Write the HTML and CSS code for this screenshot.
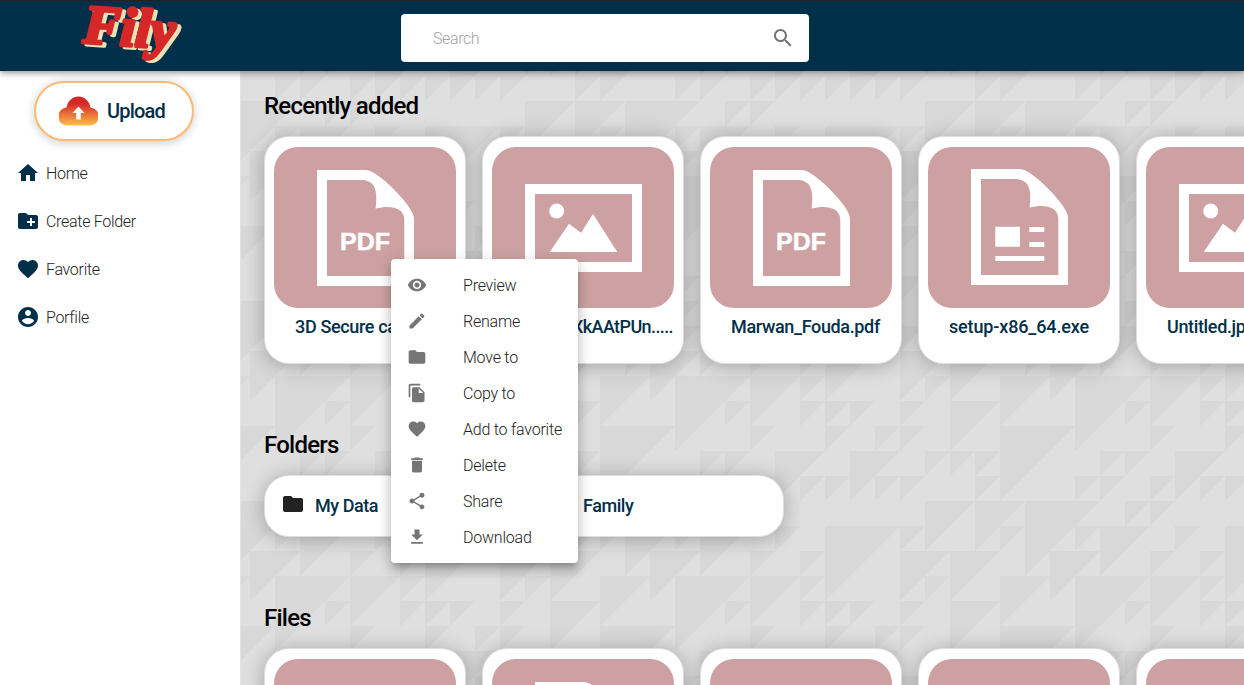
FILE: index.html
```html
<!DOCTYPE html>
<html lang="en">
<head>
<meta charset="utf-8">
<title>Fily</title>
<link rel="stylesheet" href="styles.css">
</head>
<body>
<svg class="defs" width="0" height="0" aria-hidden="true">
  <defs>
    <linearGradient id="sunset" x1="0" y1="0" x2="0" y2="1"><stop offset=".25" stop-color="#d62828"/><stop offset="1" stop-color="#fcbf49"/></linearGradient>
    <symbol id="folder" viewBox="0 0 24 24"><path d="M10 4H4c-1.1 0-1.99.9-1.99 2L2 18c0 1.1.9 2 2 2h16c1.100 0 2-.9 2-2V8c0-1.100-.9-2-2-2h-8l-2-2z"/></symbol>
    <symbol id="heart" viewBox="0 0 24 24"><path d="M12 21.350l-1.450-1.320C5.400 15.360 2 12.280 2 8.500 2 5.420 4.420 3 7.500 3c1.740 0 3.410.81 4.500 2.090C13.090 3.810 14.760 3 16.500 3 19.580 3 22 5.420 22 8.500c0 3.780-3.400 6.860-8.550 11.540L12 21.350z"/></symbol>
    <symbol id="page" viewBox="0 0 97 116"><path fill-rule="evenodd" d="M0 0H49C61 0 97 37 97 48V116H0ZM10 10V106H87.300V50C87.300 37 73 35 58.500 38.500C60.500 24 60 10 44 10Z"/></symbol>
    <symbol id="pdf" viewBox="0 0 97 116"><use href="#page"/><text class="pdf-text" x="23" y="80" textLength="50" lengthAdjust="spacingAndGlyphs">PDF</text></symbol>
    <symbol id="app" viewBox="0 0 97 116"><use href="#page"/><path d="M24.300 57.700h24.700v20H24.300zM58.300 58h15v5h-15zM58.300 73h15v5h-15zM24.300 87h49v5h-49z"/></symbol>
    <symbol id="image" viewBox="0 0 117 88"><path fill-rule="evenodd" d="M0 0H117V88H0ZM10 10V78H107V10Z"/><circle cx="31.700" cy="27" r="7.500"/><path d="M24.700 68L44 39.700L56 48.700L68 30L92.300 68Z"/></symbol>
    <g id="triangles">
      <path d="M0 7h2l-2 2zM2 7h2l-2 2zM6 7h2l-2 2zM10 7h1l-1 1zM12 7h1l-1 1zM1 0h1l-1 1zM4 0h2l-2 2zM7 0h3l-3 3zM10 0h2l-2 2zM12 0h1l-1 1zM13 1h1l-1 1zM14 1h1l-1 1zM0 1h1l-1 1zM2 1h2l-2 2zM9 1h1l-1 1zM12 1h1l-1 1zM13 2h1l-1 1zM15 2h1l-1 1zM0 2h1l-1 1zM4 2h3l-3 3zM10 2h1l-1 1zM14 3h2l-2 2zM1 3h1l-1 1zM2 3h1l-1 1zM3 3h1l-1 1zM8 3h1l-1 1zM9 3h1l-1 1zM11 3h2l-2 2zM13 4h1l-1 1zM15 4h1l-1 1zM0 4h1l-1 1zM3 4h1l-1 1zM7 4h1l-1 1zM8 4h1l-1 1zM10 4h1l-1 1zM12 4h1l-1 1zM1 5h2l-2 2zM3 5h2l-2 2zM5 5h3l-3 3zM9 5h1l-1 1zM10 5h1l-1 1zM13 6h3l-3 3zM0 6h1l-1 1zM4 6h1l-1 1zM7 6h1l-1 1zM8 6h2l-2 2zM11 6h1l-1 1z"/>
    </g>
    <pattern id="mosaic" width="400" height="200" patternUnits="userSpaceOnUse" patternTransform="translate(259 105)">
      <rect width="400" height="200" fill="#dfdfdf"/>
      <g transform="scale(25)" fill="#d8d8d8"><use href="#triangles"/><use href="#triangles" y="-8"/></g>
    </pattern>
  </defs>
</svg>

<header class="topbar">
  <svg class="logo" viewBox="0 0 120 70" role="img" aria-label="Fily">
    <g transform="rotate(4 55 35)">
      <text class="logo-text logo-back" x="10" y="47" textLength="92" lengthAdjust="spacingAndGlyphs">Fily</text>
      <text class="logo-text logo-front" x="6" y="45" textLength="92" lengthAdjust="spacingAndGlyphs">Fily</text>
    </g>
  </svg>
  <div class="search">
    <span class="search-hint">Search</span>
    <svg class="icon" viewBox="0 0 24 24"><path d="M15.500 14h-.79l-.28-.27C15.410 12.590 16 11.110 16 9.500 16 5.910 13.090 3 9.500 3S3 5.910 3 9.500 5.910 16 9.500 16c1.610 0 3.090-.59 4.230-1.570l.27.28v.79l5 4.990L20.490 19l-4.990-5zm-6 0C7.010 14 5 11.990 5 9.500S7.010 5 9.500 5 14 7.010 14 9.500 11.990 14 9.500 14z"/></svg>
  </div>
</header>

<div class="layout">
  <aside class="sidebar">
    <button class="upload">
      <svg class="cloud" viewBox="0 0 39 30"><path fill="url(#sunset)" d="M9 29.500A9 9 0 0 1 7.500 11.500C9 4.500 13.500.5 19.500.5S30 4.500 31.500 11.500A9 9 0 0 1 30 29.500Z"/><path fill="#fff" d="M19.500 10.500l6 6.500h-3.700v6.500h-4.600V17h-3.700z"/></svg>
      <span>Upload</span>
    </button>
    <nav class="nav">
      <a class="nav-item"><svg class="icon" viewBox="0 0 24 24"><path d="M10 20v-6h4v6h5v-8h3L12 3 2 12h3v8z"/></svg><span>Home</span></a>
      <a class="nav-item"><svg class="icon" viewBox="0 0 24 24"><path d="M20 6h-8l-2-2H4c-1.110 0-1.990.89-1.990 2L2 18c0 1.110.89 2 2 2h16c1.110 0 2-.89 2-2V8c0-1.110-.89-2-2-2zm-1 8h-3v3h-2v-3h-3v-2h3V9h2v3h3v2z"/></svg><span>Create Folder</span></a>
      <a class="nav-item"><svg class="icon"><use href="#heart"/></svg><span>Favorite</span></a>
      <a class="nav-item"><svg class="icon" viewBox="0 0 24 24"><path d="M12 2C6.480 2 2 6.480 2 12s4.480 10 10 10 10-4.480 10-10S17.520 2 12 2zm0 3c1.660 0 3 1.340 3 3s-1.340 3-3 3-3-1.340-3-3 1.340-3 3-3zm0 14.200c-2.500 0-4.710-1.280-6-3.220.03-1.990 4-3.080 6-3.080 1.990 0 5.970 1.090 6 3.080-1.290 1.940-3.500 3.220-6 3.220z"/></svg><span>Porfile</span></a>
    </nav>
  </aside>

  <main class="content">
    <svg class="backdrop" aria-hidden="true"><rect width="100%" height="100%" fill="url(#mosaic)"/></svg>
    <div class="sections">
      <h2 class="heading heading-recent">Recently added</h2>
      <div class="cards">
        <article class="card"><div class="thumb"><svg class="doc"><use href="#pdf"/></svg></div><div class="name">3D Secure card.pdf</div></article>
        <article class="card"><div class="thumb"><svg class="pic"><use href="#image"/></svg></div><div class="name name-long">1_XkAAtPUn.....</div></article>
        <article class="card"><div class="thumb"><svg class="doc"><use href="#pdf"/></svg></div><div class="name">Marwan_Fouda.pdf</div></article>
        <article class="card"><div class="thumb"><svg class="doc doc-app"><use href="#app"/></svg></div><div class="name name-setup">setup-x86_64.exe</div></article>
        <article class="card"><div class="thumb"><svg class="pic"><use href="#image"/></svg></div><div class="name">Untitled.jpg</div></article>
      </div>
      <h2 class="heading heading-folders">Folders</h2>
      <div class="folders">
        <div class="folder"><svg class="icon"><use href="#folder"/></svg><span>My Data</span></div>
        <div class="folder"><svg class="icon"><use href="#folder"/></svg><span>Family</span></div>
      </div>
      <h2 class="heading heading-files">Files</h2>
      <div class="cards">
        <article class="card"><div class="thumb"><svg class="pic"><use href="#image"/></svg></div></article>
        <article class="card"><div class="thumb"><svg class="doc"><use href="#pdf"/></svg></div></article>
        <article class="card"><div class="thumb"><svg class="pic"><use href="#image"/></svg></div></article>
        <article class="card"><div class="thumb"><svg class="pic"><use href="#image"/></svg></div></article>
        <article class="card"><div class="thumb"><svg class="pic"><use href="#image"/></svg></div></article>
      </div>
    </div>
  </main>
</div>

<ul class="menu">
  <li class="menu-item"><svg class="icon" viewBox="0 0 24 24"><path d="M12 4.500C7 4.500 2.730 7.610 1 12c1.730 4.390 6 7.500 11 7.500s9.270-3.110 11-7.500c-1.730-4.390-6-7.500-11-7.500zM12 17c-2.760 0-5-2.240-5-5s2.240-5 5-5 5 2.240 5 5-2.240 5-5 5zm0-8c-1.660 0-3 1.340-3 3s1.340 3 3 3 3-1.340 3-3-1.340-3-3-3z"/></svg><span>Preview</span></li>
  <li class="menu-item"><svg class="icon" viewBox="0 0 24 24"><path d="M3 17.250V21h3.750L17.810 9.940l-3.750-3.750L3 17.250zM20.710 7.040c.39-.39.39-1.020 0-1.410l-2.340-2.340c-.39-.39-1.020-.39-1.410 0l-1.830 1.830 3.750 3.750 1.830-1.830z"/></svg><span>Rename</span></li>
  <li class="menu-item"><svg class="icon"><use href="#folder"/></svg><span>Move to</span></li>
  <li class="menu-item"><svg class="icon" viewBox="0 0 24 24"><path d="M16 1H4c-1.100 0-2 .9-2 2v14h2V3h12V1zm-1 4l6 6v10c0 1.100-.9 2-2 2H7.990C6.890 23 6 22.100 6 21l.01-14c0-1.100.89-2 1.990-2h7zm-1 7h5.500L14 6.500V12z"/></svg><span>Copy to</span></li>
  <li class="menu-item"><svg class="icon"><use href="#heart"/></svg><span>Add to favorite</span></li>
  <li class="menu-item"><svg class="icon" viewBox="0 0 24 24"><path d="M6 19c0 1.100.9 2 2 2h8c1.100 0 2-.9 2-2V7H6v12zM19 4h-3.500l-1-1h-5l-1 1H5v2h14V4z"/></svg><span>Delete</span></li>
  <li class="menu-item"><svg class="icon" viewBox="0 0 24 24"><path d="M18 16.080c-.76 0-1.440.3-1.960.77L8.910 12.700c.05-.23.09-.46.09-.7s-.04-.47-.09-.7l7.050-4.110c.54.5 1.250.81 2.040.81 1.660 0 3-1.340 3-3s-1.340-3-3-3-3 1.340-3 3c0 .24.04.47.09.7L8.040 9.810C7.500 9.310 6.790 9 6 9c-1.660 0-3 1.340-3 3s1.340 3 3 3c.79 0 1.500-.31 2.040-.81l7.120 4.160c-.05.21-.08.43-.08.65 0 1.610 1.310 2.920 2.920 2.920s2.920-1.310 2.920-2.920-1.310-2.920-2.920-2.920z"/></svg><span>Share</span></li>
  <li class="menu-item"><svg class="icon" viewBox="0 0 24 24"><path d="M19 9h-4V3H9v6H5l7 7 7-7zM5 18v2h14v-2H5z"/></svg><span>Download</span></li>
</ul>
</body>
</html>
```
FILE: styles.css
```css
* { box-sizing: border-box; }
body {
  margin: 0;
  height: 685px;
  overflow: hidden;
  display: flex;
  flex-direction: column;
  font-family: Roboto, "Open Sans", sans-serif;
  color: #222;
  background: #fff;
}
.defs { position: absolute; }
.icon { width: 24px; height: 24px; flex: none; fill: currentColor; }

.topbar {
  position: relative;
  z-index: 2;
  flex: none;
  height: 71px;
  display: flex;
  align-items: flex-start;
  background: #003049;
  border-top: 1px solid #222;
  box-shadow: 0 2px 4px -1px rgba(0,0,0,.2), 0 4px 5px rgba(0,0,0,.14), 0 1px 10px rgba(0,0,0,.12);
}
.logo { width: 120px; height: 70px; margin-left: 77px; overflow: visible; }
.logo-text { font: italic bold 55px "Liberation Serif", serif; stroke-width: 3.5px; stroke-linejoin: round; }
.logo-back { fill: #eae2b7; stroke: #eae2b7; }
.logo-front { fill: #d62828; stroke: #d62828; }
.search {
  width: 408px;
  height: 48px;
  margin: 13px 0 0 204px;
  padding: 0 14px 0 32px;
  display: flex;
  align-items: center;
  justify-content: space-between;
  background: #fff;
  border-radius: 4px;
  color: #757575;
}
.search-hint { padding-top: 1px; font-size: 16px; font-weight: 300; letter-spacing: -.4px; color: #a2a2a2; }

.layout { flex: 1; min-height: 0; display: flex; }
.sidebar { width: 240px; flex: none; padding-top: 10px; background: #fff; color: #003049; }
.upload {
  width: 160px;
  height: 60px;
  margin: 0 0 8px 34px;
  padding: 0 0 0 23px;
  display: flex;
  align-items: center;
  gap: 9px;
  background: #fff;
  border: 2px solid #fdba74;
  border-radius: 30px;
  box-shadow: 0 2px 10px rgba(0,0,0,.2);
  font: 500 20px Roboto, sans-serif;
  letter-spacing: -.8px;
  color: #003049;
}
.cloud { width: 39px; height: 30px; }
.nav-item { height: 48px; padding-left: 16px; display: flex; align-items: center; gap: 6px; }
.nav-item span { padding-top: 1px; font-size: 16px; font-weight: 300; letter-spacing: -.3px; color: #222; }

.content { position: relative; flex: 1; min-width: 0; overflow: hidden; border-left: 1px solid #e2e2e2; }
.backdrop { position: absolute; inset: 0; width: 100%; height: 100%; }
.sections { position: relative; padding-left: 23px; }
.heading { margin: 0; font-size: 24px; line-height: 30px; font-weight: 500; letter-spacing: -.75px; color: #000; }
.heading-recent { padding: 20px 0 15px; }
.heading-folders { padding: 66px 0 15px; }
.heading-files { padding: 66px 0 15px; }
.cards { display: flex; gap: 16px; }
.card {
  width: 202px;
  height: 228px;
  flex: none;
  padding: 10px 9px;
  background: #fff;
  border: 1px solid #dedede;
  border-radius: 25px;
  box-shadow: 0 2px 20px rgba(0,0,0,.27);
}
.thumb { width: 182px; height: 161px; display: flex; align-items: center; justify-content: center; background: #cda1a2; border-radius: 24px; fill: #fff; }
.doc { width: 97px; height: 116px; }
.doc-app { margin-bottom: 2px; }
.pic { width: 117px; height: 88px; }
.pdf-text { font: bold 24.5px "Liberation Sans", sans-serif; stroke: #fff; stroke-width: .5px; }
.name { width: 160px; margin: 8px 0 0 21px; overflow: hidden; font-size: 18px; line-height: 22px; font-weight: 500; letter-spacing: -.35px; white-space: nowrap; color: #003049; }
.name-long { text-align: right; letter-spacing: -.6px; }
.name-setup { letter-spacing: -.15px; }

.folders { display: flex; gap: 16px; }
.folder {
  width: 252px;
  height: 62px;
  padding: 0 0 5px 16px;
  display: flex;
  align-items: center;
  gap: 10px;
  background: #fff;
  border: 1px solid #dedede;
  border-radius: 25px;
  box-shadow: 0 2px 20px rgba(0,0,0,.27);
}
.folder span { padding-top: 4px; font-size: 18px; font-weight: 500; letter-spacing: -.45px; color: #003049; }

.menu {
  position: absolute;
  z-index: 3;
  left: 391px;
  top: 259px;
  width: 187px;
  margin: 0;
  padding: 8px 0;
  list-style: none;
  background: #fff;
  border-radius: 4px;
  box-shadow: 0 5px 5px -3px rgba(0,0,0,.2), 0 8px 10px 1px rgba(0,0,0,.14), 0 3px 14px 2px rgba(0,0,0,.12);
}
.menu-item { height: 36px; padding-left: 16px; display: flex; align-items: center; gap: 36px; font-size: 16px; font-weight: 300; letter-spacing: -.22px; white-space: nowrap; color: #222; }
.menu-item .icon { width: 20px; height: 20px; color: #757575; }
.menu-item span { padding-top: 1px; }
```
